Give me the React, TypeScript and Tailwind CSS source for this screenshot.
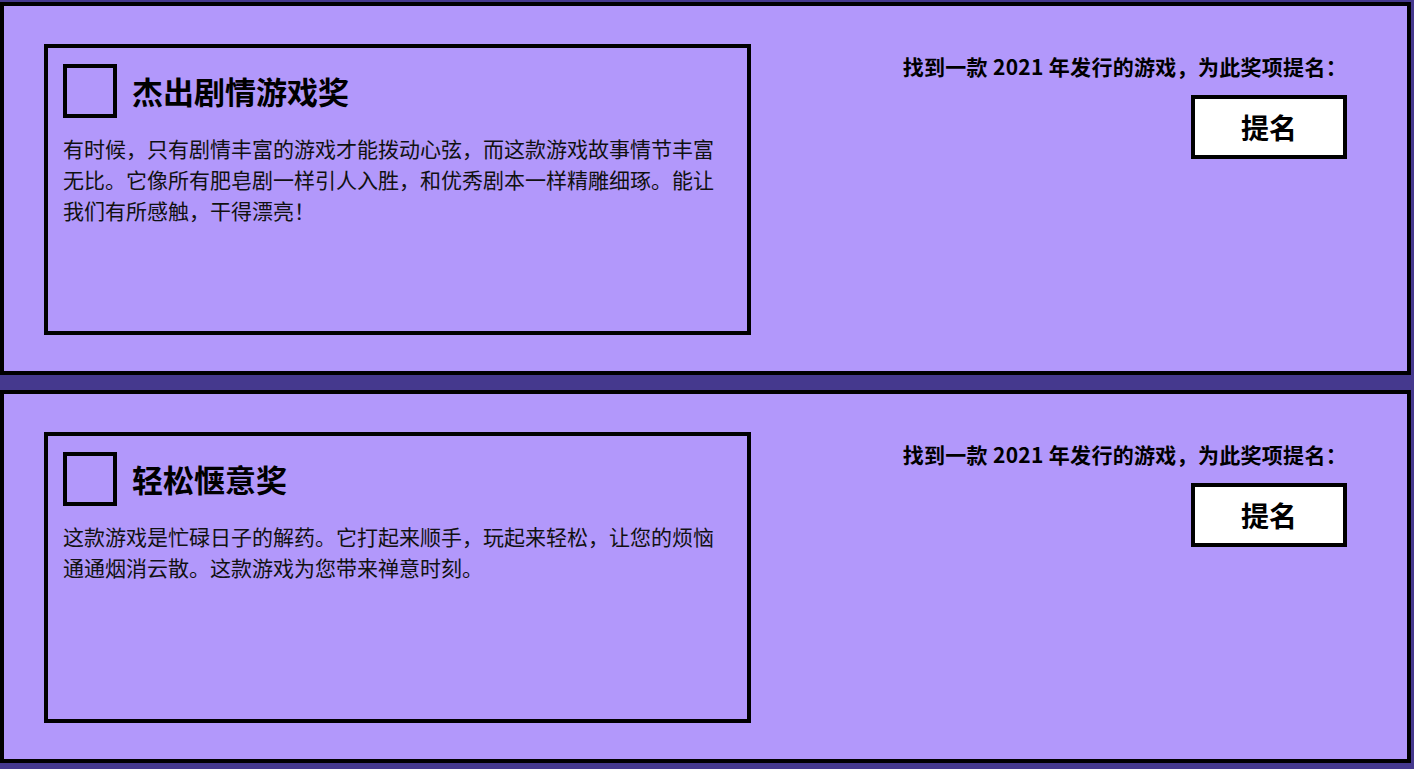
import React from 'react';

interface Award {
    title: string;
    description: string;
}

const awards: Award[] = [
    {
        title: '杰出剧情游戏奖',
        description:
            '有时候，只有剧情丰富的游戏才能拨动心弦，而这款游戏故事情节丰富无比。它像所有肥皂剧一样引人入胜，和优秀剧本一样精雕细琢。能让我们有所感触，干得漂亮！',
    },
    {
        title: '轻松惬意奖',
        description: '这款游戏是忙碌日子的解药。它打起来顺手，玩起来轻松，让您的烦恼通通烟消云散。这款游戏为您带来禅意时刻。',
    },
];

const AwardSection: React.FC<{ award: Award }> = ({ award }) => (
    <section className="flex border-4 border-black bg-[#b298fb] pl-[40px] pr-[60px] pt-[38px] pb-[36px]">
        <div className="flex h-[291px] w-[707px] shrink-0 flex-col border-4 border-black pl-[15px] pr-[15px] pt-[16px]">
            <div className="flex items-center gap-[15px]">
                <span className="h-[54px] w-[54px] shrink-0 border-4 border-black" />
                <h2 className="text-[31px] font-bold leading-[40px] text-black">{award.title}</h2>
            </div>
            <p className="mt-[15px] text-[21px] leading-[31px] text-[#111]">{award.description}</p>
        </div>
        <div className="flex flex-1 flex-col items-end pt-2">
            <p className="text-[21px] font-bold leading-[28px] tracking-[0.3px] text-black">找到一款 2021 年发行的游戏，为此奖项提名：</p>
            <button className="mt-[15px] flex h-[64px] w-[156px] items-center justify-center border-4 border-black bg-white text-[28px] font-bold text-black">
                提名
            </button>
        </div>
    </section>
);

export default function App() {
    return (
        <div className="flex min-h-screen w-full flex-col gap-[15px] bg-[#45398e] pt-[2px] pr-[3px] font-['Noto_Sans_CJK_SC',sans-serif]">
            {awards.map((award) => (
                <AwardSection key={award.title} award={award} />
            ))}
        </div>
    );
}
